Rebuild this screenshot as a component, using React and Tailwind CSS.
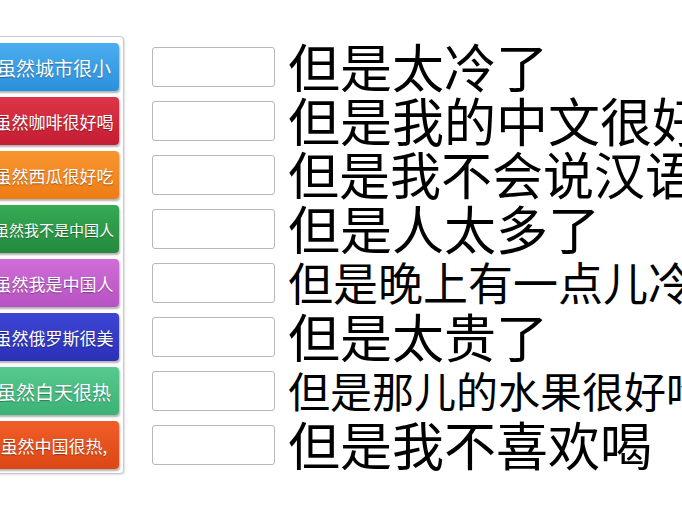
import React from 'react';

const items = [
  { left: '虽然城市很小', right: '但是太冷了', bg: 'bg-gradient-to-b from-[#4aaef0] to-[#2b90dc]', ls: 'text-[19px]', rs: 'text-[52px]' },
  { left: '虽然咖啡很好喝', right: '但是我的中文很好', bg: 'bg-gradient-to-b from-[#de3448] to-[#c41c32]', ls: 'text-[17px]', rs: 'text-[52px]' },
  { left: '虽然西瓜很好吃', right: '但是我不会说汉语', bg: 'bg-gradient-to-b from-[#f89530] to-[#ee7c14]', ls: 'text-[17px]', rs: 'text-[51px]' },
  { left: '虽然我不是中国人', right: '但是人太多了', bg: 'bg-gradient-to-b from-[#36ab55] to-[#25893e]', ls: 'text-[15px]', rs: 'text-[52px]' },
  { left: '虽然我是中国人', right: '但是晚上有一点儿冷', bg: 'bg-gradient-to-b from-[#d06dd8] to-[#b752c2]', ls: 'text-[17px]', rs: 'text-[45px]' },
  { left: '虽然俄罗斯很美', right: '但是太贵了', bg: 'bg-gradient-to-b from-[#3d45d4] to-[#2a30b8]', ls: 'text-[17px]', rs: 'text-[52px]' },
  { left: '虽然白天很热', right: '但是那儿的水果很好吃', bg: 'bg-gradient-to-b from-[#57c98e] to-[#3bb176]', ls: 'text-[19px]', rs: 'text-[42px]' },
  { left: '虽然中国很热,', right: '但是我不喜欢喝', bg: 'bg-gradient-to-b from-[#f05e28] to-[#dc4614]', ls: 'text-[17px]', rs: 'text-[52px]' },
];

const font = { fontFamily: '"Noto Sans CJK SC", "Noto Sans", sans-serif' };

export default function App() {
  return (
    <div className="w-[682px] h-[512px] overflow-hidden bg-white" style={font}>
      <div className="flex pt-[36px]">
        {/* draggable word tiles */}
        <div className="ml-[-18px] w-[142px] shrink-0 flex flex-col gap-[6px] pt-[6px] pb-[4px] pl-[6px] pr-[5px] border border-[#c8c8c8] rounded-[4px] bg-white shadow-[1px_1px_2px_rgba(0,0,0,0.12)]">
          {items.map((it) => (
            <div
              key={it.left}
              className={`h-[48px] w-[130px] rounded-[4px] flex items-center justify-center ${it.bg} shadow-[1px_2px_2px_rgba(0,0,0,0.3)]`}
            >
              <span className={`${it.ls} text-white whitespace-nowrap leading-none [text-shadow:0_1px_1px_rgba(0,0,0,0.35)]`}>
                {it.left}
              </span>
            </div>
          ))}
        </div>

        {/* drop targets + sentences */}
        <div className="ml-[28px] flex flex-col gap-[6px] pt-[7px]">
          {items.map((it) => (
            <div key={it.right} className="h-[48px] flex items-center">
              <div className="w-[123px] h-[40px] shrink-0 border border-[#b8b8b8] rounded-[3px] bg-white" />
              <span className={`ml-[13px] mt-[-3px] ${it.rs} text-black whitespace-nowrap leading-none`}>
                {it.right}
              </span>
            </div>
          ))}
        </div>
      </div>
    </div>
  );
}
